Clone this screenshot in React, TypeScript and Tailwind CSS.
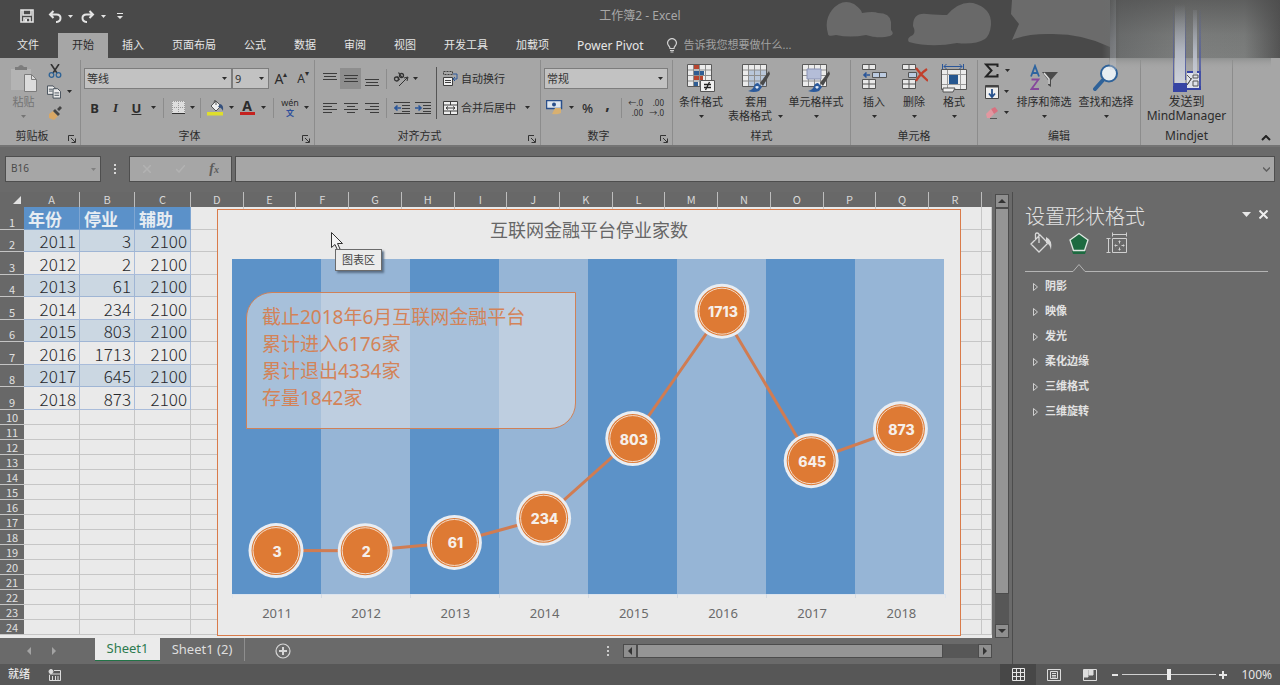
import { useState } from 'react';
import type { ReactNode } from 'react';

const TABS = ['开始', '插入', '页面布局', '公式', '数据', '审阅', '视图', '开发工具', '加载项', 'Power Pivot'];

const COLUMNS = ['A', 'B', 'C', 'D', 'E', 'F', 'G', 'H', 'I', 'J', 'K', 'L', 'M', 'N', 'O', 'P', 'Q', 'R', ''];

const DATA = [
  { year: 2011, closed: 3 },
  { year: 2012, closed: 2 },
  { year: 2013, closed: 61 },
  { year: 2014, closed: 234 },
  { year: 2015, closed: 803 },
  { year: 2016, closed: 1713 },
  { year: 2017, closed: 645 },
  { year: 2018, closed: 873 },
];

const SECTIONS = ['阴影', '映像', '发光', '柔化边缘', '三维格式', '三维旋转'];

function Caret({ className = 'w-2' }: { className?: string }) {
  return (
    <span className={`flex shrink-0 items-center justify-center ${className}`}>
      <svg width="5" height="3" viewBox="0 0 5 3" fill="currentColor">
        <path d="M0 0h5L2.5 3z" />
      </svg>
    </span>
  );
}

function Sep() {
  return <span className="mx-1 h-5 w-px shrink-0 bg-[#8c8c8c]" />;
}

function Tool({ label, className = 'w-[21px]', children }: { label: string; className?: string; children: ReactNode }) {
  return (
    <button aria-label={label} className={`flex h-[21px] shrink-0 items-center justify-center ${className}`}>
      {children}
    </button>
  );
}

function Group({ name, className, launcher, children }: { name: string; className: string; launcher?: boolean; children: ReactNode }) {
  return (
    <section className={`flex shrink-0 flex-col border-r border-[#8c8c8c] ${className}`}>
      <div className="flex h-[67px]">{children}</div>
      <div className={`relative flex h-[18px] items-center justify-center ${launcher ? 'pr-4' : ''}`}>
        <span>{name}</span>
        {launcher && (
          <button aria-label={`${name}设置`} className="absolute right-1 bottom-[2px]">
            <svg width="8" height="8" viewBox="0 0 8 8" fill="none" stroke="#333" strokeWidth="1">
              <path d="M.5 6V.5H6M3 3l4 4M7.5 3.5v4h-4" />
            </svg>
          </button>
        )}
      </div>
    </section>
  );
}

function BigButton({ lines, className, caret = true, icon }: { lines: string[]; className: string; caret?: boolean; icon: ReactNode }) {
  const last = lines.length - 1;
  return (
    <button className={`flex shrink-0 flex-col items-center pt-1 ${className}`}>
      <span className="flex h-[31px] items-start justify-center">{icon}</span>
      {lines.map((line, i) => (
        <span key={line} className="flex h-[14px] items-center gap-1 whitespace-nowrap">
          {line}
          {caret && i === last && last > 0 && <Caret />}
        </span>
      ))}
      {caret && last === 0 && <Caret className="h-[14px] w-2" />}
    </button>
  );
}

// 三行线条，用于各种对齐按钮
function Lines({ rows }: { rows: [number, number, number][] }) {
  return (
    <svg width="14" height="14" viewBox="0 0 14 14" stroke="#3c3c3c" strokeWidth="1">
      {rows.map(([x1, x2, y]) => (
        <path key={y} d={`M${x1} ${y}.5H${x2}`} />
      ))}
    </svg>
  );
}

function IndentIcon({ right }: { right?: boolean }) {
  return (
    <svg width="16" height="14" viewBox="0 0 16 14" fill="none" stroke="#3c3c3c">
      <path d="M0 1.5h16M8 4.5h8M8 7.5h8M8 10.5h8M0 12.5h16" />
      <path d={right ? 'M0 7h6M3.5 4.5 6 7 3.5 9.5' : 'M7 7H1M3.5 4.5 1 7l2.500 2.500'} stroke="#2b579a" strokeWidth="1.600" />
    </svg>
  );
}

function Brush() {
  return (
    <g>
      <path d="M28 7 19 19l3 3 7-12z" fill="#4a4a4a" />
      <path d="M17 19l4 4-3 4q-5 2-11 0 5-1 6-5 1-3 4-3z" fill="#2b5a9c" />
      <path d="M14 23q2-2 4 0l-2 2z" fill="#e4ecf6" />
    </g>
  );
}

function TableIcon({ kind }: { kind: 'cond' | 'table' | 'cell' }) {
  return (
    <svg width="30" height="29" viewBox="0 0 30 29" fill="none">
      <path d="M1.500.500h24v22h-24z" fill="#ececec" stroke="#5a5a5a" />
      {kind === 'cond' && (
        <>
          <path d="M8 1h6v4H8zM8 12h9v4H8z" fill="#b8452f" />
          <path d="M8 7h10v4H8zM8 18h4v4H8z" fill="#2f5d93" />
        </>
      )}
      {kind === 'table' && <path d="M8 6h17v16H8z" fill="#b9c7da" />}
      <path d="M2 6h23M2 11.500h23M2 17h23M7.500 1v21M13.500 1v21M19.500 1v21" stroke="#8e8e8e" />
      {kind === 'cell' && <path d="M6 5h14v10H6z" fill="#b4bdd8" stroke="#8a93b4" />}
      {kind === 'cond' ? (
        <>
          <path d="M14.500 16.500h14v11h-14z" fill="#f0f0f0" stroke="#555" />
          <path d="M18 20.500h7M18 23.500h7M23.500 18l-4 8" stroke="#222" strokeWidth="1.300" />
        </>
      ) : (
        <Brush />
      )}
    </svg>
  );
}

function CellsIcon({ kind }: { kind: 'insert' | 'delete' | 'format' }) {
  if (kind === 'format') {
    return (
      <svg width="28" height="29" viewBox="0 0 28 29" fill="none">
        <path d="M1.500 5.500h25v20h-25z" fill="#ececec" stroke="#555" />
        <path d="M2 10.500h24M2 20.500h24M7.500 6v19M20.500 6v19" stroke="#999" />
        <path d="M3 24h12l-2 4H3z" fill="#ececec" stroke="#555" />
        <path d="M9 11h9v9H9z" fill="#25568f" />
        <path d="M4 2.500h18M6.500 0 4 2.500 6.500 5M19.500 0 22 2.500 19.500 5M2.500 0v5M23.500 0v5" stroke="#2b579a" />
      </svg>
    );
  }
  return (
    <svg width="28" height="28" viewBox="0 0 28 28" fill="none" stroke="#555">
      <path d="M2.500.500h13v5h-13zM9 .500v5M2.500 15.500h13v9h-13zM9 15.500v9M2.500 20h13" fill="#e8e8e8" />
      {kind === 'insert' ? (
        <>
          <path d="M12.500 8.500h14v5h-14zM19.500 8.500v5" fill="#bccbe0" />
          <path d="M10 11H4M6.500 8.500 4 11l2.500 2.500" stroke="#2b579a" strokeWidth="1.600" />
        </>
      ) : (
        <>
          <path d="M8.500 8.500h8v5h-8z" fill="#bccbe0" />
          <path d="M16 4q5 7 12 13M27 5q-7 5-11 12" stroke="#c2402c" strokeWidth="2.200" />
        </>
      )}
    </svg>
  );
}

function TitleBar() {
  return (
    <div className="relative z-10 flex h-8 items-center pl-5 text-[#e4e4e4]">
      <button aria-label="保存" className="w-7">
        <svg width="14" height="14" viewBox="0 0 14 14" fill="none" stroke="currentColor" strokeWidth="1.600">
          <path d="M1 1h12v12H1zM3 1v5h8V1M4 13V9h6v4" />
          <path d="M5 10h2v3H5z" fill="currentColor" stroke="none" />
        </svg>
      </button>
      <button aria-label="撤消" className="flex w-[33px] items-center gap-1">
        <svg width="14" height="13" viewBox="0 0 14 13" fill="none" stroke="currentColor" strokeWidth="2">
          <path d="M5.500 1 2 4.500 5.500 8M2 4.500h6.500q4 0 4 3.500t-4 4H8" />
        </svg>
        <Caret />
      </button>
      <button aria-label="恢复" className="flex w-9 items-center gap-1">
        <svg width="14" height="13" viewBox="0 0 14 13" fill="none" stroke="currentColor" strokeWidth="2">
          <path d="M8.500 1 12 4.500 8.500 8M12 4.500H5.500q-4 0-4 3.500t4 4H6" />
        </svg>
        <Caret />
      </button>
      <button aria-label="自定义快速访问工具栏">
        <svg width="6" height="6" viewBox="0 0 6 6" fill="currentColor">
          <path d="M0 0h6v1H0zM0 3h6L3 6z" />
        </svg>
      </button>
      <h1 className="absolute inset-x-0 text-center text-xs text-[#a8a8a8]">工作簿2 - Excel</h1>
    </div>
  );
}

function TitleArt() {
  return (
    <svg className="pointer-events-none absolute top-0 right-0 z-20" width="480" height="100" viewBox="0 0 480 100">
      <defs>
        <linearGradient id="haze" x1="0" x2="1" y1="0" y2="0">
          <stop offset="0" stopColor="#6a6c6c" stopOpacity="0" />
          <stop offset=".1" stopColor="#6c6e6e" />
          <stop offset=".5" stopColor="#7e807f" />
          <stop offset=".8" stopColor="#7c7e7d" />
          <stop offset="1" stopColor="#545454" />
        </linearGradient>
        <linearGradient id="dim" x1="0" x2="0" y1="0" y2="1">
          <stop offset="0" stopColor="#4a4a4a" stopOpacity=".6" />
          <stop offset=".6" stopColor="#4a4a4a" stopOpacity=".1" />
          <stop offset="1" stopColor="#4a4a4a" stopOpacity="0" />
        </linearGradient>
        <linearGradient id="seam" x1="0" x2="0" y1="0" y2="1">
          <stop offset="0" stopColor="#8a8c8b" stopOpacity=".8" />
          <stop offset="1" stopColor="#a6a6a6" stopOpacity="0" />
        </linearGradient>
        <linearGradient id="streak" x1="0" x2="0" y1="0" y2="1">
          <stop offset="0" stopColor="#a6acb8" stopOpacity="0" />
          <stop offset=".6" stopColor="#b8bdc9" stopOpacity=".9" />
          <stop offset="1" stopColor="#cdd1da" />
        </linearGradient>
        <linearGradient id="blueStreak" x1="0" x2="0" y1="0" y2="1">
          <stop offset="0" stopColor="#4a5aa8" stopOpacity="0" />
          <stop offset="1" stopColor="#4652a4" />
        </linearGradient>
      </defs>
      <path d="M28 34q-4-14 4-24 10-12 22-6 8 6 8 9 12-2 16 0 12 0 13 9v8q4 4-1 6-12 3-24-1-16 3-30 0-8 2-8-1z" fill="#696969" />
      <path d="M109 42q-3-4 4-7 3-3 0-9 0-14 14-12 12 1 20 1 12-14 26-12 19 5 18 22-1 10-6 14-10 6-28 4-26 5-48-1z" fill="#696969" />
      <path d="M212 0h98v47q-28-14-62-13-22 0-36 6l7-16-8-10z" fill="#6b6b6b" />
      <path d="M302 0h178v58H302z" fill="url(#haze)" />
      <path d="M316 0h164v58H316z" fill="url(#dim)" />
      <path d="M309 58h162v11H309z" fill="url(#seam)" />
      <path d="M310 0h6v70h-6z" fill="url(#streak)" opacity=".3" />
      <path d="M375 4h10v79h-10zM393 10h4v64h-4z" fill="url(#streak)" />
      <path d="M373 6h1v80h-1zM385 10h1v70h-1zM399 10h2v76h-2z" fill="url(#blueStreak)" />
    </svg>
  );
}

function TabRow() {
  const [active, setActive] = useState('开始');
  return (
    <nav className="flex h-[26px] items-end pl-[3px] text-[11px] text-[#e6e6e6]">
      <button className="mr-[5px] h-[25px] px-[14px]">文件</button>
      {TABS.map(tab => (
        <button
          key={tab}
          onClick={() => setActive(tab)}
          className={`h-[25px] whitespace-nowrap px-[14px] last-of-type:text-xs ${active === tab ? 'bg-[#a6a6a6] text-[#2a2a2a]' : ''}`}
        >
          {tab}
        </button>
      ))}
      <label className="ml-2 flex h-[25px] items-center gap-[6px] text-[#a2a2a2]">
        <svg width="12" height="15" viewBox="0 0 12 15" fill="none" stroke="#d0d0d0" strokeWidth="1.200">
          <path d="M4 10.500Q4 9 2.500 7.500a4.300 4.300 0 1 1 7 0Q8 9 8 10.500zM4 12.500h4M4.500 14h3" />
        </svg>
        <input className="w-32 bg-transparent placeholder:text-[#a2a2a2]" placeholder="告诉我您想要做什么..." />
      </label>
    </nav>
  );
}

function Select({ label, options, className }: { label: string; options: string[]; className: string }) {
  return (
    <label className={`relative flex h-[21px] shrink-0 border border-[#7d7d7d] bg-[#c2c2c2] ${className}`}>
      <select aria-label={label} className="w-full appearance-none pl-[2px] text-[11px] text-[#333]">
        {options.map(o => (
          <option key={o}>{o}</option>
        ))}
      </select>
      <Caret className="pointer-events-none absolute inset-y-0 right-1" />
    </label>
  );
}

function Ribbon() {
  return (
    <div className="flex h-[89px] border-b-2 border-[#747474] bg-[#a6a6a6] pt-[2px] text-[11px] leading-[14px] text-[#2c2c2c]">
      <Group name="剪贴板" className="w-[81px]" launcher>
        <BigButton
          className="w-[47px] text-[#747474]"
          lines={['粘贴']}
          icon={
            <svg width="27" height="29" viewBox="0 0 27 29" fill="none">
              <path d="M1 5h20v21H1z" fill="#b4b4b4" />
              <path d="M5 6V3h3q3-4 6 0h3v3z" fill="#7c7c7c" />
              <path d="M14.500 10.500h7l5 5v12h-12z" fill="#dcdcdc" stroke="#7c7c7c" />
              <path d="M21.500 10.500v5h5" stroke="#7c7c7c" />
            </svg>
          }
        />
        <div className="flex flex-col">
          <Tool label="剪切" className="w-4">
            <svg width="14" height="14" viewBox="0 0 14 14" fill="none" stroke="#333" strokeWidth="1.600">
              <path d="M3 0l6 9M11 0 5 9" />
              <circle cx="3.500" cy="11" r="2.300" stroke="#2e6396" strokeWidth="1.300" />
              <circle cx="10.500" cy="11" r="2.300" stroke="#2e6396" strokeWidth="1.300" />
            </svg>
          </Tool>
          <Tool label="复制" className="w-[26px] gap-1">
            <svg width="15" height="14" viewBox="0 0 15 14" fill="#ececec" stroke="#3f4a55">
              <path d="M.500.500h6l2 2v7h-8zM2 4h4M2 6h4" />
              <path d="M6.500 3.500h5l3 3v7h-8zM8 8h5M8 10.500h5" />
            </svg>
            <Caret />
          </Tool>
          <Tool label="格式刷" className="w-4">
            <svg width="14" height="14" viewBox="0 0 14 14">
              <path d="M1 8l4-3 5 5-4 4-5-2z" fill="#d8a765" />
              <path d="M5 5l2-2 5 5-2 2zM9 3l3-3 2 2-3 3z" fill="#444" />
            </svg>
          </Tool>
        </div>
      </Group>

      <Group name="字体" className="w-[234px]" launcher>
        <div className="flex flex-col gap-2 pt-2 pl-[3px]">
          <div className="flex">
            <Select label="字体" options={['等线', '宋体', '微软雅黑']} className="w-[148px]" />
            <Select label="字号" options={['9', '10', '11']} className="w-[37px]" />
            <Tool label="增大字号" className="w-6 text-sm">
              A<span className="self-start text-[8px]">▴</span>
            </Tool>
            <Tool label="减小字号" className="w-5 text-xs">
              A<span className="self-start text-[8px]">▾</span>
            </Tool>
          </div>
          <div className="flex items-center text-[13px]">
            <Tool label="加粗"><b>B</b></Tool>
            <Tool label="倾斜"><i className="font-['Liberation_Serif',serif] font-bold">I</i></Tool>
            <Tool label="下划线"><b className="underline">U</b></Tool>
            <Caret className="w-3" />
            <Sep />
            <Tool label="边框" className="w-5">
              <svg width="13" height="13" viewBox="0 0 13 13" fill="#dedede">
                <path d="M0 0h13v12H0z" />
                <path d="M.500 0v12M6.500 0v12M12.500 0v12M0 .500h13M0 6.500h13" stroke="#999" strokeDasharray="1 1" />
                <path d="M0 12.500h13" stroke="#333" />
              </svg>
            </Tool>
            <Caret />
            <Sep />
            <Tool label="填充颜色" className="w-5">
              <svg width="17" height="16" viewBox="0 0 17 16">
                <path d="M0 12h16v3.500H0z" fill="#dede2c" />
                <path d="M4 6l5-5 5 5-5 5z" fill="#eee" stroke="#555" />
                <path d="M9 5V1Q7-1 7 3" fill="none" stroke="#555" />
                <path d="M13 4q4 1 3 7-2-4-5-4z" fill="#35507c" />
              </svg>
            </Tool>
            <Caret className="w-3" />
            <Tool label="字体颜色" className="w-5 flex-col">
              <span className="text-sm leading-3 font-bold">A</span>
              <span className="h-[3px] w-[15px] bg-[#c5221f]" />
            </Tool>
            <Caret className="w-3" />
            <Sep />
            <Tool label="拼音" className="w-6 flex-col">
              <span className="text-[9px] leading-[10px]">wén</span>
              <span className="text-[8px] leading-[10px] font-bold text-[#2d4f9c]">文</span>
            </Tool>
            <Caret />
          </div>
        </div>
      </Group>

      <Group name="对齐方式" className="w-[226px]" launcher>
        <div className="flex w-[121px] flex-col gap-2 pt-2 pl-1">
          <div className="flex items-center">
            <Tool label="顶端对齐"><Lines rows={[[0, 14, 1], [1, 13, 4], [0, 14, 7]]} /></Tool>
            <Tool label="垂直居中" className="w-[21px] bg-[#8e8e8e]"><Lines rows={[[0, 14, 3], [1, 13, 6], [0, 14, 9]]} /></Tool>
            <Tool label="底端对齐"><Lines rows={[[0, 14, 7], [1, 13, 10], [0, 14, 13]]} /></Tool>
            <Sep />
            <Tool label="方向" className="w-5">
              <svg width="16" height="16" viewBox="0 0 16 16" fill="none" stroke="#333" strokeWidth="1.300">
                <circle cx="3.500" cy="8" r="2" />
                <path d="M4.500 5.500 6.500 9M5.500 1.500l3.500 5" />
                <circle cx="8.500" cy="4.500" r="2" />
                <path d="M6 15l8.500-8.500M15 6l-4 1M15 6l-1 4" strokeWidth="1" />
              </svg>
            </Tool>
            <Caret />
          </div>
          <div className="flex items-center">
            <Tool label="左对齐"><Lines rows={[[0, 14, 2], [0, 9, 5], [0, 14, 8], [0, 9, 11]]} /></Tool>
            <Tool label="居中"><Lines rows={[[0, 14, 2], [3, 11, 5], [0, 14, 8], [3, 11, 11]]} /></Tool>
            <Tool label="右对齐"><Lines rows={[[0, 14, 2], [5, 14, 5], [0, 14, 8], [5, 14, 11]]} /></Tool>
            <Sep />
            <Tool label="减少缩进"><IndentIcon /></Tool>
            <Tool label="增加缩进"><IndentIcon right /></Tool>
          </div>
        </div>
        <div className="mt-[7px] flex h-[52px] flex-col gap-2 border-l border-[#555] pt-px pl-[6px]">
          <button className="flex h-[21px] items-center gap-[3px]">
            <svg width="15" height="15" viewBox="0 0 15 15" fill="#eee" stroke="#3f3f3f">
              <path d="M.500.500h9v3h-9z" fill="none" strokeDasharray="2 1" />
              <path d="M.500 6.500h9v8h-9zM2 9.500h6M2 11.500h6" />
              <path d="M10 3h4v5h-4M12 6l-2 2 2 2" fill="none" stroke="#2b579a" />
            </svg>
            自动换行
          </button>
          <button className="flex h-[21px] items-center gap-[3px]">
            <svg width="15" height="14" viewBox="0 0 15 14" fill="#eee" stroke="#3f3f3f">
              <path d="M.500.500h14v13H.500zM.500 4h14M.500 10h14M7.500.500V4M7.500 10v3.500" />
              <path d="M3 7h9M5 5.500 3 7l2 1.500M10 5.500 12 7l-2 1.500" fill="none" />
            </svg>
            合并后居中
            <Caret className="w-4" />
          </button>
        </div>
      </Group>

      <Group name="数字" className="w-[132px]" launcher>
        <div className="flex flex-col gap-2 pt-2 pl-[3px]">
          <Select label="数字格式" options={['常规', '数值', '百分比']} className="w-[124px]" />
          <div className="flex items-center">
            <Tool label="会计数字格式">
              <svg width="17" height="15" viewBox="0 0 17 15">
                <path d="M.500.500h15v8H.500z" fill="#dfe6ee" stroke="#2a4f8a" strokeWidth="1.500" />
                <circle cx="8" cy="4.500" r="2" fill="#2a4f8a" />
                <path d="M9 8h6v5q-4 2-9 1z" fill="#d8b070" />
              </svg>
            </Tool>
            <Caret className="w-3" />
            <Tool label="百分比样式" className="w-[21px] text-[13px] font-medium">%</Tool>
            <Tool label="千位分隔样式" className="w-[19px] text-base font-bold"><span className="-mt-2">,</span></Tool>
            <Sep />
            {['←.0', '.00'].map((top, i) => (
              <Tool key={top} label={i ? '减少小数位数' : '增加小数位数'} className="w-[21px] flex-col items-end pr-1 text-[8px] leading-[10px]">
                <span>{top}</span>
                <span>{i ? '→.0' : '.00'}</span>
              </Tool>
            ))}
          </div>
        </div>
      </Group>

      <Group name="样式" className="w-[178px]">
        <BigButton className="w-14" lines={['条件格式']} icon={<TableIcon kind="cond" />} />
        <BigButton className="w-[54px]" lines={['套用', '表格格式']} icon={<TableIcon kind="table" />} />
        <BigButton className="w-[66px]" lines={['单元格样式']} icon={<TableIcon kind="cell" />} />
      </Group>

      <Group name="单元格" className="w-[127px]">
        <BigButton className="ml-[3px] w-10" lines={['插入']} icon={<CellsIcon kind="insert" />} />
        <BigButton className="w-10" lines={['删除']} icon={<CellsIcon kind="delete" />} />
        <BigButton className="w-10" lines={['格式']} icon={<CellsIcon kind="format" />} />
      </Group>

      <Group name="编辑" className="w-[163px]">
        <div className="flex w-[35px] flex-col pl-[6px]">
          <Tool label="自动求和" className="w-[27px] gap-1">
            <svg width="15" height="15" viewBox="0 0 15 15" fill="none" stroke="#222" strokeWidth="2">
              <path d="M13.500 4V1.500H2L7.500 7.500 2 13.500h11.500V11" />
            </svg>
            <Caret />
          </Tool>
          <Tool label="填充" className="w-[27px] gap-1">
            <svg width="14" height="14" viewBox="0 0 14 14" fill="#eee" stroke="#444">
              <path d="M.500.500h13v13H.500z" />
              <path d="M.500 1.500h13" strokeWidth="2" />
              <path d="M7 4v8M4 8.500 7 12l3-3.500" fill="none" stroke="#25508c" strokeWidth="1.800" />
            </svg>
            <Caret />
          </Tool>
          <Tool label="清除" className="w-[27px] gap-1">
            <svg width="14" height="12" viewBox="0 0 14 12">
              <path d="M6 2l4-2 3 4-4 3z" fill="#d9707f" />
              <path d="M1 7l5-5 3 5-4 4H2z" fill="#e297a0" />
              <path d="M5 11.500h7" stroke="#555" />
            </svg>
            <Caret />
          </Tool>
        </div>
        <BigButton
          className="w-[62px]"
          lines={['排序和筛选']}
          icon={
            <svg width="28" height="28" viewBox="0 0 28 28" fill="none">
              <path d="M1 12.500 5 2l4 10.500M2.500 9h5" stroke="#2d64a0" strokeWidth="1.800" />
              <path d="M1.500 15.500h7l-7 9.500h7.500" stroke="#86489c" strokeWidth="1.800" />
              <path d="M12 8h16l-7 8v7l-3-2v-5z" fill="#4b4b4b" />
              <path d="M14 9l5 6v5" stroke="#ddd" strokeWidth="1.500" />
            </svg>
          }
        />
        <BigButton
          className="w-[62px]"
          lines={['查找和选择']}
          icon={
            <svg width="26" height="27" viewBox="0 0 26 27">
              <path d="M2 25l8-9" stroke="#2f6299" strokeWidth="4" strokeLinecap="round" />
              <circle cx="16" cy="9.500" r="8" fill="#e8eef2" stroke="#2f6299" strokeWidth="2" />
            </svg>
          }
        />
      </Group>

      <Group name="Mindjet" className="w-[92px] text-xs/[14px]">
        <BigButton
          className="w-[91px]"
          caret={false}
          lines={['发送到', 'MindManager']}
          icon={
            <svg width="28" height="28" viewBox="0 0 28 28" fill="none">
              <path d="M14 8h13v17H14" fill="#dfe2ea" stroke="#3644a4" strokeWidth="2" />
              <path d="M0 19h14v9H0z" fill="#3644a4" />
              <path d="M14 11l4 4-4 6M14 21l5-7M20 11h5v3h-5zM20 17h5v5h-5z" stroke="#555" />
            </svg>
          }
        />
      </Group>

      <button aria-label="折叠功能区" className="mt-auto mr-[9px] mb-1 ml-auto">
        <svg width="10" height="6" viewBox="0 0 10 6" fill="none" stroke="#222" strokeWidth="2">
          <path d="M1 5l4-4 4 4" />
        </svg>
      </button>
    </div>
  );
}

function FormulaBar() {
  return (
    <div className="flex h-[45px] shrink-0 items-start px-[5px] pt-[9px] text-[#4a4a4a]">
      <label className="relative flex h-[26px] w-24 border border-[#4e4e4e] bg-[#a6a6a6]">
        <input aria-label="名称框" defaultValue="B16" className="w-full pb-[2px] pl-[5px] text-[10px]" />
        <Caret className="absolute inset-y-0 right-1 text-[#808080]" />
      </label>
      <span className="flex h-[26px] w-7 flex-col items-center justify-center gap-[2px]">
        <i className="size-[2px] bg-[#d8d8d8]" />
        <i className="size-[2px] bg-[#d8d8d8]" />
        <i className="size-[2px] bg-[#d8d8d8]" />
      </span>
      <div className="flex h-[26px] w-[103px] items-center border border-[#4e4e4e] bg-[#a6a6a6]">
        <button aria-label="取消" className="flex w-[34px] justify-center">
          <svg width="8" height="8" viewBox="0 0 8 8" stroke="#b2b2b2" strokeWidth="1.500"><path d="M0 0l8 8M8 0 0 8" /></svg>
        </button>
        <button aria-label="输入" className="flex w-[34px] justify-center">
          <svg width="9" height="8" viewBox="0 0 9 8" fill="none" stroke="#b2b2b2" strokeWidth="1.500"><path d="M0 4l3 3 6-7" /></svg>
        </button>
        <button aria-label="插入函数" className="w-[34px] font-['Liberation_Serif',serif] text-sm font-bold italic text-[#5c5c5c]">
          f<span className="text-[10px]">x</span>
        </button>
      </div>
      <label className="relative ml-[3px] flex h-[26px] flex-1 border border-[#4e4e4e] bg-[#a6a6a6]">
        <input aria-label="编辑栏" className="w-full px-2 text-xs" />
        <svg className="absolute top-[10px] right-1" width="7" height="5" viewBox="0 0 7 5" fill="none" stroke="#606060" strokeWidth="1.500">
          <path d="M0 .500l3.500 3.500L7 .500" />
        </svg>
      </label>
    </div>
  );
}

function GridRow({ index }: { index: number }) {
  const item = DATA[index - 2];
  const tall = index < 10;
  const height = tall ? (index % 2 ? 'h-[23px]' : 'h-[22px]') : 'h-[15px]';
  const values: (string | number)[] = index === 1 ? ['年份', '停业', '辅助'] : item ? [item.year, item.closed, 2100] : [];
  return (
    <tr className={height}>
      <th className="border-b border-[#c4c4c4] bg-[#686868] p-0 align-bottom text-[11px] leading-[13px] font-normal text-[#e0e0e0]">{index}</th>
      {COLUMNS.map((col, i) => {
        const fill = i > 2 || !tall ? 'border-[#c6c6c6]' : index === 1 ? 'bg-[#5b91c9] border-[#7fa6d2]' : index % 2 ? 'border-[#a9bcda]' : 'bg-[#cbd7e2] border-[#9fb5d4]';
        return (
          <td
            key={i}
            className={`border-r border-b p-0 text-[17px] leading-[21px] whitespace-nowrap ${fill} ${index === 1 ? 'pl-1 text-left font-bold text-[#e6ecf2]' : 'pr-[3px] text-right font-light'}`}
          >
            {values[i]}
          </td>
        );
      })}
    </tr>
  );
}

function Chart() {
  // 数值轴从 -300 到 2100
  const points = DATA.map((d, i) => ({ ...d, x: 59 + i * 89.2, y: 384 - ((d.closed + 300) / 2400) * 336 }));
  return (
    <div className="absolute top-[17px] left-[217px] h-[427px] w-[744px] border border-[#d97b4a] bg-[#eaeaea]">
      <svg width="742" height="425" viewBox="1 1 742 425" fontFamily="'Noto Sans','Noto Sans CJK SC',sans-serif">
        <text x="372" y="28" textAnchor="middle" fontSize="18" fill="#666">互联网金融平台停业家数</text>
        {points.map((p, i) => (
          <rect key={p.year} x={15 + i * 89} y="50" width={i < 7 ? 90 : 89} height="335" fill={i % 2 ? '#96b5d6' : '#5c92c8'} />
        ))}
        <path d="M15 385.500h713M15.500 385v4M728.500 385v4" stroke="#dce4ee" fill="none" />
        {points.slice(1).map((p, i) => (
          <path key={p.year} d={`M${104 + i * 89}.500 385v4`} stroke="#d4dae2" />
        ))}
        <polyline points={points.map(p => `${p.x},${p.y}`).join(' ')} fill="none" stroke="#d07c52" strokeWidth="3" />
        {points.map(p => (
          <g key={p.year}>
            <circle cx={p.x} cy={p.y} r="27.500" fill="#e9edf2" />
            <circle cx={p.x} cy={p.y} r="24.500" fill="#de7a34" />
            <circle cx={p.x} cy={p.y} r="23" fill="none" stroke="#f3dccb" strokeWidth="1" />
            <text x={p.x + 1} y={p.y + 6} textAnchor="middle" fontSize="14" fontWeight="800" fontFamily="Inter, sans-serif" fill="#f6efe9">{p.closed}</text>
            <text x={p.x + 1} y="409" textAnchor="middle" fontSize="13" fill="#6a6a6a">{p.year}</text>
          </g>
        ))}
      </svg>
      <div className="absolute top-[82px] left-7 w-[330px] rounded-tl-[26px] rounded-br-[26px] border border-[#cf8158] bg-[#d9dfe6]/60 pt-[11px] pb-4 pl-[15px] text-[19px] leading-[27px] text-[#d38358]">
        <p>截止2018年6月互联网金融平台</p>
        <p>累计进入6176家</p>
        <p>累计退出4334家</p>
        <p>存量1842家</p>
      </div>
      <svg className="absolute top-[22px] left-[113px]" width="12" height="19" viewBox="0 0 12 19">
        <path d="M.500.500v15l3.500-3 2.500 5.500 2.500-1-2.500-5.500h5z" fill="#f4f4f4" stroke="#333" />
      </svg>
      <div role="tooltip" className="absolute top-[39px] left-[117px] border border-[#6b6b6b] bg-[#ececec] px-[6px] py-[2px] text-[11px] leading-4 text-[#444] shadow-[2px_2px_2px_#5b7088]">
        图表区
      </div>
    </div>
  );
}

function Sheet() {
  return (
    <div className="relative min-w-0 flex-1 overflow-hidden bg-[#eaeaea]">
      <table className="w-full table-fixed border-separate border-spacing-0 font-['Noto_Sans_CJK_SC',sans-serif] text-[#26282c]">
        <colgroup>
          <col className="w-6" />
          <col className="w-14" />
          <col className="w-[55px]" />
          <col className="w-14" />
          {COLUMNS.slice(3, -1).map(c => <col key={c} />)}
          <col className="w-[10px]" />
        </colgroup>
        <thead>
          <tr className="h-[15px] bg-[#686868] text-[11px] leading-[15px] text-[#d8d8d8]">
            <th className="p-0">
              <svg className="mr-[3px] ml-auto" width="8" height="8" viewBox="0 0 8 8"><path d="M8 0v8H0z" fill="#e2e2e2" /></svg>
            </th>
            {COLUMNS.map((c, i) => (
              <th key={i} className="h-[15px] border-r border-[#bdbdbd] p-0 font-normal last:border-r-0">{c}</th>
            ))}
          </tr>
        </thead>
        <tbody>
          {Array.from({ length: 24 }, (_, i) => <GridRow key={i} index={i + 1} />)}
        </tbody>
      </table>
      <Chart />
    </div>
  );
}

function Arrow({ d }: { d: string }) {
  return <svg width="8" height="8" viewBox="0 0 8 8" fill="#333"><path d={d} /></svg>;
}

function VScroll() {
  return (
    <div className="flex w-5 shrink-0 flex-col px-[3px] pt-[2px]">
      <button aria-label="向上滚动" className="flex h-[14px] items-center justify-center border border-[#4c4c4c] bg-[#8f8f8f]"><Arrow d="M0 6h8L4 2z" /></button>
      <div className="flex flex-1 flex-col bg-[#575757]">
        <span className="h-[386px] border border-[#4c4c4c] bg-[#959595]" />
      </div>
      <button aria-label="向下滚动" className="flex h-[14px] items-center justify-center border border-[#4c4c4c] bg-[#8f8f8f]"><Arrow d="M0 2h8L4 6z" /></button>
    </div>
  );
}

function SheetTabs() {
  return (
    <div className="flex h-[26px] shrink-0 items-start text-[13px] text-[#dedede]">
      <div className="flex h-[25px] w-[95px] items-center gap-[17px] pl-[25px] opacity-50">
        <button aria-label="上一张"><svg width="8" height="8" viewBox="0 0 8 8" fill="#ddd"><path d="M6 0v8L2 4z" /></svg></button>
        <button aria-label="下一张"><svg width="8" height="8" viewBox="0 0 8 8" fill="#ddd"><path d="M2 0v8l4-4z" /></svg></button>
      </div>
      <button className="h-[23px] w-[65px] border-b border-[#217346] bg-[#ebebeb] text-[#2c7a4f]">Sheet1</button>
      <button className="h-[23px] w-[85px] border-r border-[#8e8e8e] whitespace-nowrap">Sheet1 (2)</button>
      <button aria-label="新工作表" className="ml-[30px] flex h-[25px] items-center">
        <svg width="16" height="16" viewBox="0 0 16 16" fill="none" stroke="#d6d6d6" strokeWidth="1.200">
          <circle cx="8" cy="8" r="7" />
          <path d="M8 4v8M4 8h8" strokeWidth="2" />
        </svg>
      </button>
      <div className="ml-auto flex h-[26px] items-center pr-5">
        <span className="mr-[14px] flex flex-col gap-[2px]">
          <i className="size-[2px] bg-[#ccc]" />
          <i className="size-[2px] bg-[#ccc]" />
          <i className="size-[2px] bg-[#ccc]" />
        </span>
        <button aria-label="向左滚动" className="flex h-[14px] w-[14px] items-center justify-center border border-[#4c4c4c] bg-[#8f8f8f]"><Arrow d="M6 0v8L2 4z" /></button>
        <div className="h-[14px] w-[341px] bg-[#575757]">
          <span className="block h-[14px] w-[306px] border border-[#4c4c4c] bg-[#959595]" />
        </div>
        <button aria-label="向右滚动" className="flex h-[14px] w-[14px] items-center justify-center border border-[#4c4c4c] bg-[#8f8f8f]"><Arrow d="M2 0v8l4-4z" /></button>
      </div>
    </div>
  );
}

function FormatPane() {
  return (
    <aside className="flex w-[268px] shrink-0 flex-col border-l border-[#4c4c4c] px-3 text-[#e2e2e2]">
      <header className="flex h-[38px] items-end">
        <h2 className="text-xl leading-[26px] font-light">设置形状格式</h2>
        <button aria-label="任务窗格选项" className="mb-[13px] ml-auto">
          <svg width="9" height="5" viewBox="0 0 9 5" fill="#e8e8e8"><path d="M0 0h9L4.500 5z" /></svg>
        </button>
        <button aria-label="关闭" className="mb-[11px] ml-2">
          <svg width="9" height="9" viewBox="0 0 9 9" stroke="#eee" strokeWidth="2"><path d="M.500.500l8 8M8.500.500l-8 8" /></svg>
        </button>
      </header>
      <div className="flex h-[34px] gap-4 pt-[2px] pl-[5px]">
        <button aria-label="填充与线条" className="size-[22px]">
          <svg width="23" height="22" viewBox="0 0 23 22" fill="none" stroke="#d8d8d8" strokeWidth="1.300">
            <path d="M1 12 10 3l8 8-9 9zM9 11V3q0-2-2-2T5.500 4v4" />
            <path d="M16 5q7 3 5 13-1-6-5-7z" fill="#d8d8d8" stroke="none" />
          </svg>
        </button>
        <button aria-label="效果" className="size-[22px]">
          <svg width="22" height="23" viewBox="0 0 22 23">
            <path d="M4 19h14l-1 3H5z" fill="#1d6a40" />
            <path d="M11 1.500 20 8l-3.500 10.500h-11L2 8z" fill="#1d6a40" stroke="#dfe8e2" strokeWidth="1.300" />
          </svg>
        </button>
        <button aria-label="大小与属性" className="size-[22px]">
          <svg width="22" height="22" viewBox="0 0 22 22" fill="none" stroke="#d0d0d0">
            <path d="M6.500 6.500h14v14h-14zM6.500 2.500h14M6.500.500v4M20.500.500v4M2.500 6.500v14M.500 6.500h4M.500 20.500h4" />
            <path d="M13.500 8.500v3M13.500 15.500v3M8.500 13.500h3M15.500 13.500h3M12.500 9.500h2M12.500 17.500h2M9.500 12.500v2M17.500 12.500v2" />
          </svg>
        </button>
      </div>
      <div className="flex h-2 items-end">
        <span className="h-px w-12 bg-[#b4b4b4]" />
        <svg width="12" height="8" viewBox="0 0 12 8" fill="none" stroke="#b4b4b4"><path d="M0 7.500 6 .500l6 7" /></svg>
        <span className="h-px flex-1 bg-[#b4b4b4]" />
      </div>
      <ul className="pt-[2px] pl-2 text-[11px] font-bold">
        {SECTIONS.map(s => (
          <li key={s}>
            <button className="flex h-[25px] items-center gap-[7px]">
              <svg width="5" height="8" viewBox="0 0 5 8" fill="none" stroke="#d0d0d0"><path d="M.500.500v7L4.500 4z" /></svg>
              {s}
            </button>
          </li>
        ))}
      </ul>
    </aside>
  );
}

function StatusBar() {
  const [zoom, setZoom] = useState(100);
  return (
    <footer className="flex h-[21px] shrink-0 items-center bg-[#575757] pl-2 text-[11px] text-[#e6e6e6]">
      <span className="font-medium">就绪</span>
      <svg className="ml-[18px]" width="13" height="12" viewBox="0 0 13 12" fill="none" stroke="#dcdcdc">
        <circle cx="3" cy="2.500" r="2" fill="#dcdcdc" />
        <path d="M6 1.500h6.500v10h-11V6M1.500 5h11M4.500 7v4M7.500 7v4M10 7v4" />
      </svg>
      <div className="ml-auto flex h-full items-center">
        <button aria-label="普通" className="flex h-full w-9 items-center justify-center bg-[#474747]">
          <svg width="13" height="13" viewBox="0 0 13 13" fill="none" stroke="#e6e6e6"><path d="M.500.500h12v12H.500zM4.500 0v13M8.500 0v13M0 4.500h13M0 8.500h13" /></svg>
        </button>
        <button aria-label="页面布局" className="flex w-9 items-center justify-center">
          <svg width="14" height="12" viewBox="0 0 14 12" fill="none" stroke="#dcdcdc"><path d="M.500.500h13v11H.500zM3.500 2.500h7v7h-7zM5 4.500h4M5 6.500h4M5 8h4" /></svg>
        </button>
        <button aria-label="分页预览" className="flex w-9 items-center justify-center">
          <svg width="14" height="12" viewBox="0 0 14 12" fill="none" stroke="#dcdcdc"><path d="M.500.500h13v11H.500z" /><path d="M1 1h4v7H1zM6 1h4v5H6z" fill="#dcdcdc" /></svg>
        </button>
        <button aria-label="缩小" className="flex w-[14px] justify-center"><span className="h-[2px] w-[6px] bg-[#e6e6e6]" /></button>
        <input
          type="range"
          aria-label="显示比例"
          min={10}
          max={190}
          value={zoom}
          onChange={e => setZoom(Number(e.target.value))}
          className="h-px w-[94px] appearance-none bg-[#d0d0d0] [&::-webkit-slider-thumb]:h-[11px] [&::-webkit-slider-thumb]:w-[4px] [&::-webkit-slider-thumb]:appearance-none [&::-webkit-slider-thumb]:bg-[#ececec]"
        />
        <button aria-label="放大" className="flex w-[14px] justify-center">
          <svg width="8" height="8" viewBox="0 0 8 8" stroke="#e6e6e6" strokeWidth="2"><path d="M4 0v8M0 4h8" /></svg>
        </button>
        <span className="w-[50px] pr-2 text-right text-xs">{zoom}%</span>
      </div>
    </footer>
  );
}

export default function App() {
  return (
    <div className="flex h-screen flex-col overflow-hidden bg-[#6a6a6a] font-['Noto_Sans','Noto_Sans_CJK_SC',sans-serif]">
      <div className="relative shrink-0 bg-[#494949]">
        <TitleArt />
        <TitleBar />
        <TabRow />
        <Ribbon />
      </div>
      <FormulaBar />
      <div className="flex min-h-0 flex-1">
        <div className="flex min-w-0 flex-1 flex-col">
          <div className="flex min-h-0 flex-1">
            <Sheet />
            <VScroll />
          </div>
          <SheetTabs />
        </div>
        <FormatPane />
      </div>
      <StatusBar />
    </div>
  );
}
